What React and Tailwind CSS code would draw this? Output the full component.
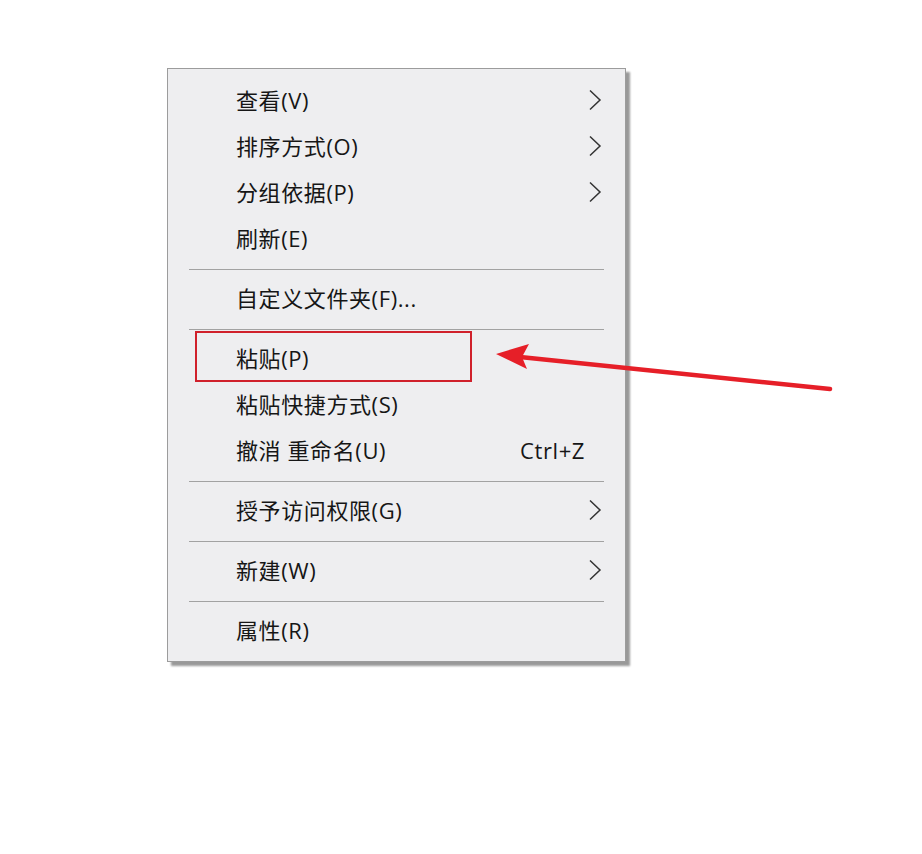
import React from 'react';

const items = [
  [
    { label: '查看(V)', sub: true },
    { label: '排序方式(O)', sub: true },
    { label: '分组依据(P)', sub: true },
    { label: '刷新(E)' },
  ],
  [{ label: '自定义文件夹(F)...' }],
  [
    { label: '粘贴(P)' },
    { label: '粘贴快捷方式(S)' },
    { label: '撤消 重命名(U)', shortcut: 'Ctrl+Z' },
  ],
  [{ label: '授予访问权限(G)', sub: true }],
  [{ label: '新建(W)', sub: true }],
  [{ label: '属性(R)' }],
];

const Chevron = () => (
  <svg width="14" height="22" viewBox="0 0 14 22" className="text-[#333]">
    <path d="M2 1.5 L12 11 L2 20.5" fill="none" stroke="currentColor" strokeWidth="1.5" />
  </svg>
);

const MenuItem = ({ item }) => (
  <div className="flex items-center h-[46px] pl-[68px] pr-[23px] pb-[2px] text-[22px] leading-none tracking-[0.6px] text-[#161616]">
    <span className="flex-1">{item.label}</span>
    {item.shortcut && <span className="mr-[17px]">{item.shortcut}</span>}
    {item.sub && <Chevron />}
  </div>
);

export default function App() {
  return (
    <div
      className="relative w-[922px] h-[854px] bg-white overflow-hidden pt-[68px] pl-[167px]"
      style={{ fontFamily: '"Open Sans", "Noto Sans CJK SC", sans-serif' }}
    >
      <div className="w-[459px] bg-[#eeeef0] border border-[#9c9c9c] pt-[9px] pb-[7px] shadow-[4px_4px_2px_rgba(0,0,0,0.4)]">
        {items.map((group, gi) => (
          <div key={gi}>
            {gi > 0 && (
              <div className="h-[14px] flex items-center px-[21px]">
                <div className="h-px w-full bg-[#a2a2a2]" />
              </div>
            )}
            {group.map((item) => (
              <MenuItem key={item.label} item={item} />
            ))}
          </div>
        ))}
      </div>

      {/* annotation: highlight box */}
      <div className="absolute left-[195px] top-[331px] w-[277px] h-[51px] border-[2.5px] border-[#d0202b]" />

      {/* annotation: arrow */}
      <svg className="absolute left-0 top-0" width="922" height="854">
        <line x1="830" y1="389" x2="520" y2="357" stroke="#e61f28" strokeWidth="4.5" strokeLinecap="round" />
        <polygon points="496,354 529,344 522,357 527,369" fill="#e61f28" />
      </svg>
    </div>
  );
}
